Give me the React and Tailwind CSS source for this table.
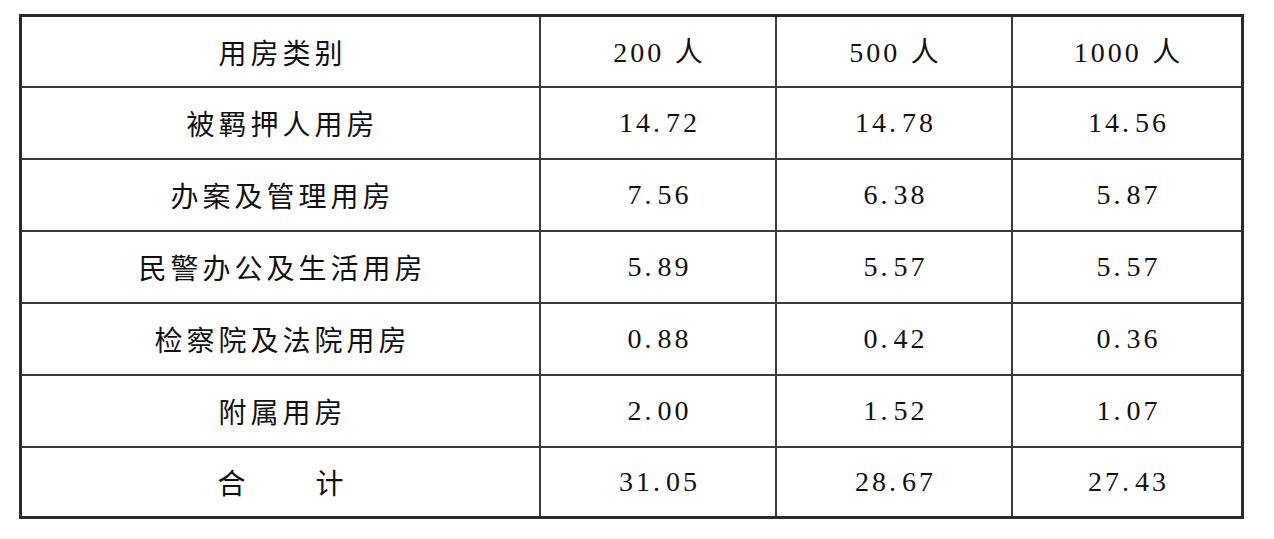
import React from "react";

const rows = [
  ["被羁押人用房", "14.72", "14.78", "14.56"],
  ["办案及管理用房", "7.56", "6.38", "5.87"],
  ["民警办公及生活用房", "5.89", "5.57", "5.57"],
  ["检察院及法院用房", "0.88", "0.42", "0.36"],
  ["附属用房", "2.00", "1.52", "1.07"],
];

// digits in a Times-like face, Chinese in the CJK face
const Num = ({ v }) => {
  const [a, b] = v.split(".");
  return (
    <span className="font-['Liberation_Serif',serif] tracking-[3px] pl-[3px]">
      {a}
      <span className="mr-[3px]">.</span>
      {b}
    </span>
  );
};

const Head = ({ n }) => (
  <span className="tracking-[3px] pl-[3px]">
    <span className="font-['Liberation_Serif',serif]">{n}</span>{" "}
    <span className="font-['Noto_Sans_CJK_SC',sans-serif]">人</span>
  </span>
);

const Cell = ({ children }) => (
  <div className="bg-white flex items-center justify-center text-[28px] text-[#111] leading-none">
    {children}
  </div>
);

const Label = ({ t }) => (
  <span className="font-['Noto_Sans_CJK_SC',sans-serif] tracking-[4px] pl-[4px]">{t}</span>
);

const App = () => {
  return (
    <div className="w-[1274px] h-[539px] bg-white pt-[14px] pl-[19px]">
      <div className="w-fit border-[3px] border-[#2b2b2b] bg-[#3a3a3a] grid grid-cols-[517px_234px_234px_228px] grid-rows-[69px_repeat(5,70px)_68px] gap-[2px]">
        <Cell><Label t="用房类别" /></Cell>
        <Cell><Head n="200" /></Cell>
        <Cell><Head n="500" /></Cell>
        <Cell><Head n="1000" /></Cell>
        {rows.map((r, i) => (
          <React.Fragment key={i}>
            <Cell><Label t={r[0]} /></Cell>
            <Cell><Num v={r[1]} /></Cell>
            <Cell><Num v={r[2]} /></Cell>
            <Cell><Num v={r[3]} /></Cell>
          </React.Fragment>
        ))}
        <div className="bg-white flex items-center justify-center gap-[70px] text-[28px] text-[#111] leading-none font-['Noto_Sans_CJK_SC',sans-serif]">
          <span>合</span>
          <span>计</span>
        </div>
        <Cell><Num v="31.05" /></Cell>
        <Cell><Num v="28.67" /></Cell>
        <Cell><Num v="27.43" /></Cell>
      </div>
    </div>
  );
};

export default App;
